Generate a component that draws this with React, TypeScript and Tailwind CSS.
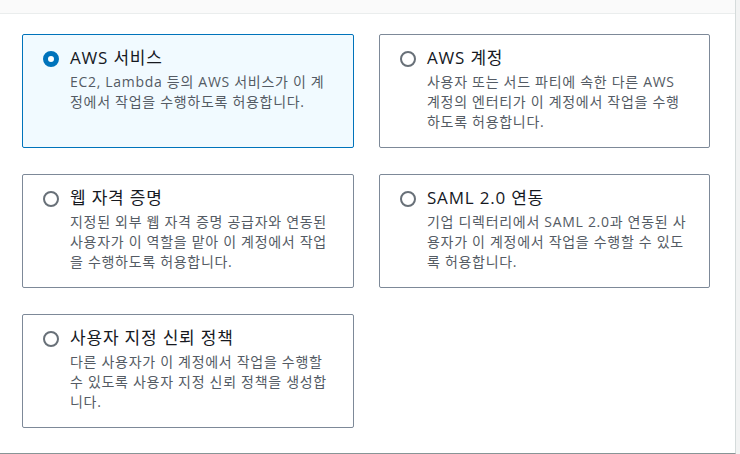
import React from 'react';

type Option = {
  id: string;
  title: string;
  desc: string;
};

const options: Option[] = [
  { id: 'service', title: 'AWS 서비스', desc: 'EC2, Lambda 등의 AWS 서비스가 이 계정에서 작업을 수행하도록 허용합니다.' },
  { id: 'account', title: 'AWS 계정', desc: '사용자 또는 서드 파티에 속한 다른 AWS 계정의 엔터티가 이 계정에서 작업을 수행하도록 허용합니다.' },
  { id: 'web', title: '웹 자격 증명', desc: '지정된 외부 웹 자격 증명 공급자와 연동된 사용자가 이 역할을 맡아 이 계정에서 작업을 수행하도록 허용합니다.' },
  { id: 'saml', title: 'SAML 2.0 연동', desc: '기업 디렉터리에서 SAML 2.0과 연동된 사용자가 이 계정에서 작업을 수행할 수 있도록 허용합니다.' },
  { id: 'custom', title: '사용자 지정 신뢰 정책', desc: '다른 사용자가 이 계정에서 작업을 수행할 수 있도록 사용자 지정 신뢰 정책을 생성합니다.' },
];

function Tile({ option, selected }: { option: Option; selected: boolean }) {
  return (
    <div
      className={
        'flex h-[114px] gap-[11px] rounded-[2px] border pl-[20px] pr-[20px] pt-[12px] ' +
        (selected ? 'border-[#0073bb] bg-[#f1faff]' : 'border-[#7d8998] bg-white')
      }
    >
      <div className="pt-[4px]">
        {selected ? (
          <div className="h-[16px] w-[16px] rounded-full border-[5px] border-[#0073bb] bg-white" />
        ) : (
          <div className="h-[16px] w-[16px] rounded-full border-2 border-[#687078] bg-white" />
        )}
      </div>
      <div className="min-w-0 flex-1">
        <div className="text-[17px] leading-[22px] tracking-[0.8px] text-[#16191f]">{option.title}</div>
        <p className="mt-[3px] text-[14px] leading-[20px] tracking-[0.7px] text-[#545b64]">{option.desc}</p>
      </div>
    </div>
  );
}

export default function App() {
  return (
    <div
      className="flex h-[454px] w-[740px] bg-[#f2f3f3]"
      style={{ fontFamily: '"Open Sans", "Noto Sans CJK KR", sans-serif' }}
    >
      <div className="flex w-[736px] flex-col border-r border-b border-r-[#d5dbdb] border-b-[#879596] bg-white">
        <div className="h-[14px] border-b border-[#eaeded] bg-[#fafafa]" />
        <div className="grid grid-cols-[332px_331px] gap-x-[25px] gap-y-[26px] pl-[22px] pt-[20px]">
          {options.map((o) => (
            <Tile key={o.id} option={o} selected={o.id === 'service'} />
          ))}
        </div>
      </div>
    </div>
  );
}
